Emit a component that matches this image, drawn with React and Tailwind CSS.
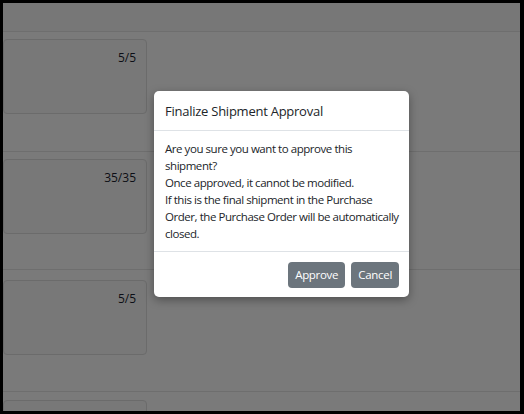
import React from 'react';

const rows = [
  { qty: '5/5', cls: 'h-[120px] pt-[7px]' },
  { qty: '35/35', cls: 'h-[118px] pt-[7px]' },
  { qty: '5/5', cls: 'h-[122px] pt-[10px]' },
  { qty: '', cls: 'h-[120px] pt-[8px]' },
];

const ShipmentRow = ({ qty, cls }) => (
  <div className={`${cls} shrink-0 border-b border-[#dcdcdc] bg-[#f4f4f4]`}>
    <div className="h-[75px] w-[144px] rounded-[4px] border border-[#d6d6d6] bg-[#f0f0f0] pr-[10px] pt-[9px] text-right text-[12px] text-[#1a1d2e]">
      {qty}
    </div>
  </div>
);

const App = () => {
  return (
    <div className="h-[414px] w-[524px] bg-black pb-[3px] pl-[3px] pr-[4px] pt-[3px]" style={{ fontFamily: '"Open Sans", "Noto Sans", sans-serif' }}>
      <div className="relative flex h-full flex-col overflow-hidden bg-[#f4f4f4]">
        {/* page behind the dialog */}
        <div className="h-[29px] shrink-0 border-b border-[#dcdcdc] bg-[#eeeeee]" />
        {rows.map((r, i) => (
          <ShipmentRow key={i} qty={r.qty} cls={r.cls} />
        ))}

        {/* backdrop */}
        <div className="absolute inset-0 bg-black/50" />

        {/* dialog */}
        <div className="absolute left-[151px] top-[88px] w-[255px] rounded-[5px] bg-white text-[#212529] shadow-[0_3px_10px_rgba(0,0,0,0.35)]">
          <div className="flex h-[40px] items-center border-b border-[#dee2e6] px-[11px] pt-[3px]">
            <h5 className="text-[13px] font-medium tracking-[-0.25px]">Finalize Shipment Approval</h5>
          </div>
          <div className="pb-[9px] pl-[11px] pr-[8px] pt-[9px] text-[11.5px] leading-[17px] tracking-[-0.45px]">
            Are you sure you want to approve this shipment?
            <br />
            Once approved, it cannot be modified.
            <br />
            If this is the final shipment in the Purchase Order, the Purchase Order will be automatically closed.
          </div>
          <div className="flex justify-end gap-[6px] border-t border-[#dee2e6] px-[10px] pb-[9px] pt-[10px]">
            <button className="h-[26px] rounded-[4px] bg-[#6c757d] px-[7px] text-[11.5px] tracking-[-0.3px] text-white">Approve</button>
            <button className="h-[26px] rounded-[4px] bg-[#6c757d] px-[7px] text-[11.5px] tracking-[-0.3px] text-white">Cancel</button>
          </div>
        </div>
      </div>
    </div>
  );
};

export default App;
